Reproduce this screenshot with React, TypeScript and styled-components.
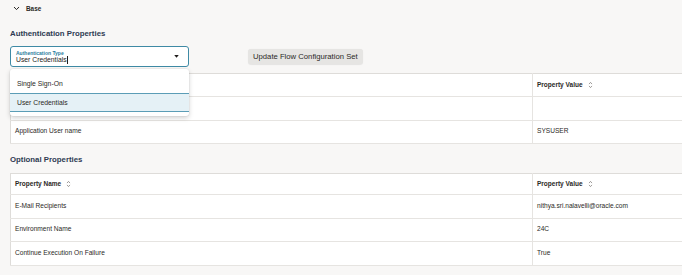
import * as React from 'react'
import styled, { createGlobalStyle } from 'styled-components'

const GlobalStyle = createGlobalStyle`
  html, body {
    margin: 0;
    padding: 0;
    background: #f8f7f6;
  }
  body {
    font-family: 'Liberation Sans', Arial, sans-serif;
    color: #1f1c1a;
  }
`

interface Row {
  name: string
  value: string
}

const authRows: Row[] = [
  { name: '', value: '' },
  { name: 'Application User name', value: 'SYSUSER' }
]

const optionalRows: Row[] = [
  { name: 'E-Mail Recipients', value: 'nithya.sri.nalavelli@oracle.com' },
  { name: 'Environment Name', value: '24C' },
  { name: 'Continue Execution On Failure', value: 'True' }
]

function SortIcon() {
  return (
    <SortSvg viewBox="0 0 6 9" width="5" height="8">
      <path d="M1.2 3.4 L3 1.4 L4.8 3.4" />
      <path d="M1.2 5.6 L3 7.6 L4.8 5.6" />
    </SortSvg>
  )
}

function PropertyTable(props: { rows: Row[]; showName?: boolean; headerHeight: number }) {
  return (
    <Table>
      <colgroup>
        <col style={{ width: 522 }} />
        <col />
      </colgroup>
      <thead>
        <tr>
          <HeadCell height={props.headerHeight}>
            {props.showName && (
              <HeadLabel>
                Property Name <SortIcon />
              </HeadLabel>
            )}
          </HeadCell>
          <HeadCell height={props.headerHeight}>
            <HeadLabel>
              Property Value <SortIcon />
            </HeadLabel>
          </HeadCell>
        </tr>
      </thead>
      <tbody>
        {props.rows.map((row, i) => (
          <tr key={i}>
            <Cell>{row.name}</Cell>
            <Cell>{row.value}</Cell>
          </tr>
        ))}
      </tbody>
    </Table>
  )
}

export default function App() {
  return (
    <>
      <GlobalStyle />
      <Page>
        <SectionToggle>
          <svg viewBox="0 0 8 6" width="7" height="5">
            <path d="M1 1.2 L4 4.3 L7 1.2" fill="none" stroke="#2b2926" strokeWidth="1.2" />
          </svg>
          <ToggleLabel>Base</ToggleLabel>
        </SectionToggle>

        <Heading top={12}>Authentication Properties</Heading>

        <Toolbar>
          <SelectWrap>
            <SelectBox>
              <SelectText>
                <FieldLabel>Authentication Type</FieldLabel>
                <FieldValue>
                  User Credentials<Caret />
                </FieldValue>
              </SelectText>
              <svg viewBox="0 0 6 4" width="5" height="3">
                <path d="M0 0 L6 0 L3 3.6 Z" fill="#1f1c1a" />
              </svg>
            </SelectBox>
            <Menu>
              <MenuItem>Single Sign-On</MenuItem>
              <MenuItem selected>User Credentials</MenuItem>
            </Menu>
          </SelectWrap>
          <Button>Update Flow Configuration Set</Button>
        </Toolbar>

        <TableWrap top={6}>
          <PropertyTable rows={authRows} headerHeight={22} />
        </TableWrap>

        <Heading top={10}>Optional Properties</Heading>

        <TableWrap top={7}>
          <PropertyTable rows={optionalRows} showName headerHeight={20} />
        </TableWrap>
      </Page>
    </>
  )
}

const Page = styled.div`
  width: 682px;
  height: 275px;
  overflow: hidden;
  padding-left: 10px;
  box-sizing: border-box;
`

const SectionToggle = styled.div`
  height: 16px;
  display: flex;
  align-items: center;
  gap: 6px;
  padding-left: 3px;
`

const ToggleLabel = styled.span`
  font-size: 6.4px;
  font-weight: 700;
  color: #2b2926;
`

const Heading = styled.h2<{ top: number }>`
  margin: ${p => p.top}px 0 0;
  font-size: 7.8px;
  line-height: 12px;
  font-weight: 700;
  color: #2e3a52;
`

const Toolbar = styled.div`
  margin-top: 6px;
  display: flex;
  align-items: center;
  gap: 59px;
`

const SelectWrap = styled.div`
  position: relative;
  width: 179px;
`

const SelectBox = styled.div`
  height: 21px;
  box-sizing: border-box;
  border: 1.5px solid #3f8aa5;
  border-radius: 3px;
  background: #fff;
  display: flex;
  align-items: center;
  justify-content: space-between;
  padding: 0 9px 0 5px;
`

const SelectText = styled.div`
  display: flex;
  flex-direction: column;
  padding-top: 1px;
`

const FieldLabel = styled.span`
  font-size: 5px;
  line-height: 6px;
  font-weight: 700;
  color: #2a7c9c;
`

const FieldValue = styled.span`
  font-size: 6.8px;
  line-height: 8px;
  color: #1f1c1a;
  display: flex;
  align-items: center;
`

const Caret = styled.span`
  display: inline-block;
  width: 0.6px;
  height: 8px;
  background: #1f1c1a;
  margin-left: 0.5px;
`

const Menu = styled.div`
  position: absolute;
  top: 23px;
  left: 0;
  width: 179px;
  background: #fff;
  border-radius: 3px;
  padding: 4px 0 4px;
  box-shadow: 0 2px 5px rgba(0, 0, 0, 0.18), 0 0 0 0.5px rgba(0, 0, 0, 0.06);
  z-index: 2;
`

const MenuItem = styled.div<{ selected?: boolean }>`
  height: 19px;
  display: flex;
  align-items: center;
  padding-left: 7px;
  font-size: 6.8px;
  color: #2b2926;
  box-sizing: border-box;
  background: ${p => (p.selected ? '#e5f1f6' : '#fff')};
  border-top: 1px solid ${p => (p.selected ? '#5b9db6' : 'transparent')};
  border-bottom: 1px solid ${p => (p.selected ? '#5b9db6' : 'transparent')};
  &:first-child {
    height: 20px;
  }
`

const Button = styled.button`
  height: 15px;
  padding: 0 5px;
  border: none;
  border-radius: 3px;
  background: #e6e5e3;
  font-family: 'Liberation Sans', Arial, sans-serif;
  font-size: 7.7px;
  color: #2b2926;
  white-space: nowrap;
  box-shadow: 0 0.5px 1px rgba(0, 0, 0, 0.08);
`

const TableWrap = styled.div<{ top: number }>`
  margin-top: ${p => p.top}px;
  width: 720px;
`

const Table = styled.table`
  width: 100%;
  border-collapse: collapse;
  table-layout: fixed;
  background: #fff;
  border: 1px solid #dedcd9;
  line-height: 1;
`

const HeadCell = styled.th<{ height: number }>`
  height: ${p => p.height}px;
  padding: 0 4px;
  text-align: left;
  vertical-align: middle;
  font-size: 6.5px;
  border-right: 1px solid #e6e4e1;
  border-bottom: 1px solid #e6e4e1;
`

const HeadLabel = styled.span`
  display: inline-flex;
  align-items: center;
  gap: 5px;
  font-size: 6.5px;
  font-weight: 700;
  color: #2b2926;
  vertical-align: middle;
`

const SortSvg = styled.svg`
  fill: none;
  stroke: #6f6b67;
  stroke-width: 0.8;
`

const Cell = styled.td`
  height: 22.5px;
  padding: 0 4px;
  font-size: 6.6px;
  color: #2b2926;
  border-right: 1px solid #e6e4e1;
  border-bottom: 1px solid #e6e4e1;
  white-space: nowrap;
`
